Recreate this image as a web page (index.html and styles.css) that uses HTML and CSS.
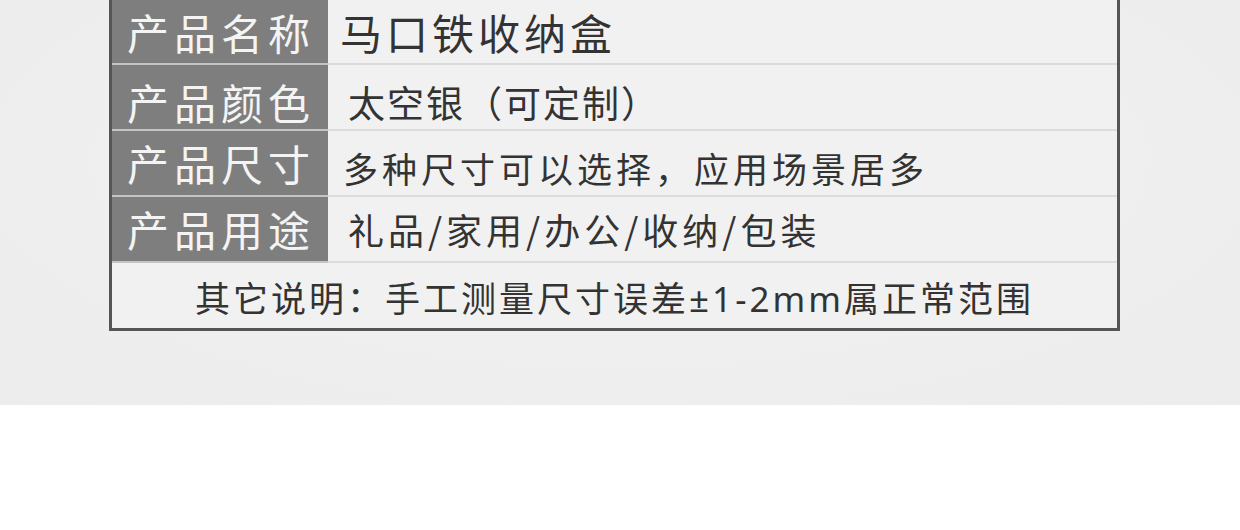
FILE: index.html
```html
<!DOCTYPE html>
<html lang="zh-CN">
<head>
  <meta charset="UTF-8">
  <title>产品参数</title>
  <link rel="stylesheet" href="styles.css">
</head>
<body>
  <div class="panel">
    <div class="spec-table">
      <div class="row">
        <div class="label">产品名称</div>
        <div class="value v-name">马口铁收纳盒</div>
      </div>
      <div class="row row-low">
        <div class="label">产品颜色</div>
        <div class="value v-color">太空银（可定制）</div>
      </div>
      <div class="row">
        <div class="label">产品尺寸</div>
        <div class="value v-size">多种尺寸可以选择，应用场景居多</div>
      </div>
      <div class="row">
        <div class="label">产品用途</div>
        <div class="value v-use">礼品/家用/办公/收纳/包装</div>
      </div>
      <div class="note">其它说明：手工测量尺寸误差±1-2mm属正常范围</div>
    </div>
  </div>
</body>
</html>
```

FILE: styles.css
```css
body {
  margin: 0;
  background: #fff;
  font-family: "Noto Sans CJK SC", "Noto Sans", sans-serif;
}
.panel {
  height: 405px;
  background: radial-gradient(ellipse at 50% 40%, #f3f3f3 0%, #eeeeee 70%, #ececec 100%);
}
.spec-table {
  width: 1005px;
  margin-left: 109px;
  border: 3px solid #555;
  border-top: none;
  background: #f1f1f1;
}
.row {
  display: grid;
  grid-template-columns: 216px 1fr;
  grid-template-rows: 66px;
  height: 66px;
}
.row:first-child {
  grid-template-rows: 65px;
  height: 65px;
}
.label,
.value {
  display: flex;
  align-items: center;
  box-sizing: border-box;
  line-height: 1;
}
.label {
  padding-left: 15px;
  background: #7e7e7e;
  border-bottom: 2px solid #c4c4c4;
  color: #f4f4f4;
  font-size: 42px;
  letter-spacing: 5px;
}
.value {
  border-bottom: 2px solid #dcdcdc;
  color: #333;
}
.row-low .label,
.row-low .value {
  padding-top: 10px;
}
.v-name {
  padding-left: 12px;
  font-size: 42px;
  letter-spacing: 4px;
}
.v-color {
  padding-left: 20px;
  font-size: 37px;
  letter-spacing: 2px;
}
.v-size {
  padding-left: 15px;
  padding-top: 8px;
  font-size: 35px;
  letter-spacing: 4px;
}
.v-use {
  padding-left: 20px;
  font-size: 36px;
  letter-spacing: 4px;
}
.note {
  height: 65px;
  display: flex;
  align-items: center;
  justify-content: center;
  padding-top: 2px;
  box-sizing: border-box;
  color: #333;
  font-family: "Noto Sans", "Noto Sans CJK SC", sans-serif;
  font-size: 35px;
  letter-spacing: 3px;
}
```
